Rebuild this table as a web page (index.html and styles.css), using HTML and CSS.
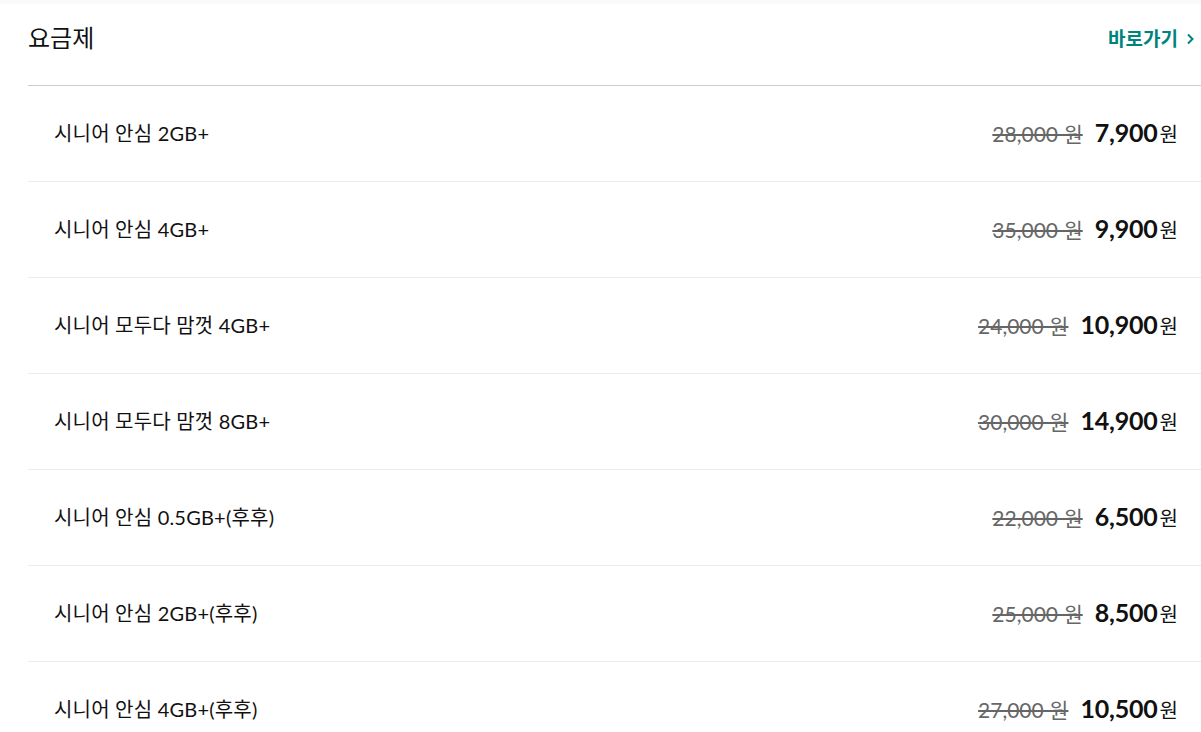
FILE: index.html
```html
<!DOCTYPE html>
<html lang="ko">
<head>
<meta charset="utf-8">
<link rel="stylesheet" href="styles.css">
</head>
<body>
<div class="topstrip"></div>
<section class="plans">
  <header class="plans-head">
    <h2 class="plans-title">요금제</h2>
    <a class="plans-link" href="#">바로가기
      <svg class="chev" width="9" height="14" viewBox="0 0 9 14"><path d="M2 2.5 L6.5 7 L2 11.5" fill="none" stroke="#00837e" stroke-width="2"/></svg>
    </a>
  </header>
  <ul class="plan-list">
    <li class="plan"><span class="plan-name">시니어 안심 2GB+</span><span class="price"><s class="old">28,000 원</s><b class="now">7,900</b><span class="won">원</span></span></li>
    <li class="plan"><span class="plan-name">시니어 안심 4GB+</span><span class="price"><s class="old">35,000 원</s><b class="now">9,900</b><span class="won">원</span></span></li>
    <li class="plan"><span class="plan-name">시니어 모두다 맘껏 4GB+</span><span class="price"><s class="old">24,000 원</s><b class="now">10,900</b><span class="won">원</span></span></li>
    <li class="plan"><span class="plan-name">시니어 모두다 맘껏 8GB+</span><span class="price"><s class="old">30,000 원</s><b class="now">14,900</b><span class="won">원</span></span></li>
    <li class="plan"><span class="plan-name">시니어 안심 0.5GB+(후후)</span><span class="price"><s class="old">22,000 원</s><b class="now">6,500</b><span class="won">원</span></span></li>
    <li class="plan"><span class="plan-name">시니어 안심 2GB+(후후)</span><span class="price"><s class="old">25,000 원</s><b class="now">8,500</b><span class="won">원</span></span></li>
    <li class="plan"><span class="plan-name">시니어 안심 4GB+(후후)</span><span class="price"><s class="old">27,000 원</s><b class="now">10,500</b><span class="won">원</span></span></li>
  </ul>
</section>
</body>
</html>
```

FILE: styles.css
```css
html, body {
  margin: 0;
  padding: 0;
  background: #fff;
  font-family: Lato, "Noto Sans CJK KR", sans-serif;
  color: #111;
}
.topstrip {
  height: 4px;
  background: #fafafa;
}
.plans {
  padding-left: 28px;
}
.plans-head {
  height: 81px;
  display: flex;
  align-items: center;
  justify-content: space-between;
  border-bottom: 1px solid #cccccc;
}
.plans-title {
  margin: 0 0 17px 0;
  font-family: "Noto Sans CJK KR", sans-serif;
  font-weight: 400;
  font-size: 24px;
  color: #111;
}
.plans-link {
  margin: 0 6px 14px 0;
  display: flex;
  align-items: center;
  gap: 8px;
  color: #00837e;
  text-decoration: none;
  font-family: "Noto Sans CJK KR", sans-serif;
  font-weight: 700;
  font-size: 19px;
}
.chev { display: block; margin-top: 3px; }
.plan-list {
  list-style: none;
  margin: 0;
  padding: 0;
}
.plan {
  height: 95px;
  border-bottom: 1px solid #ebebeb;
  display: flex;
  align-items: center;
  justify-content: space-between;
  padding: 0 23px 0 26px;
}
.plan-name {
  font-size: 20px;
  color: #111;
  margin-top: -3px;
  letter-spacing: 0.2px;
}
.price {
  display: flex;
  align-items: baseline;
  margin-top: -2px;
}
.old {
  font-size: 21px;
  color: #666;
  text-decoration: line-through;
  text-decoration-thickness: 2px;
  margin-right: 12px;
}
.now {
  font-size: 25px;
  font-weight: 700;
  color: #111;
  margin-right: 2px;
  letter-spacing: -0.2px;
}
.won {
  font-size: 20px;
  color: #111;
}
```
